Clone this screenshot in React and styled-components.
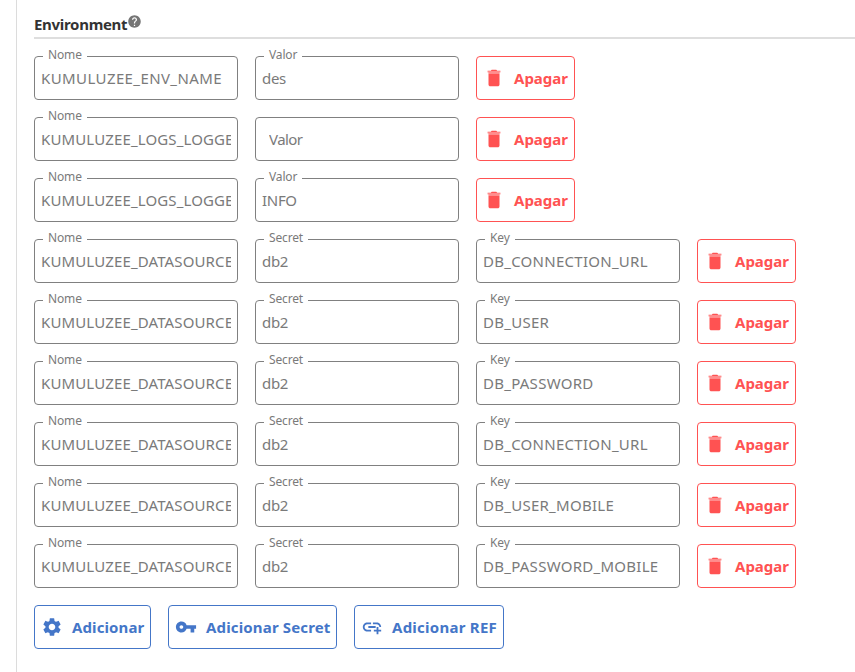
import React from "react";
import styled, { createGlobalStyle } from "styled-components";
import { MdSettings, MdVpnKey, MdAddLink, MdHelp } from "react-icons/md";

const GlobalStyle = createGlobalStyle`
  * { box-sizing: border-box; }
  body { margin: 0; background: #fff; font-family: "Noto Sans", sans-serif; }
`;

const Page = styled.div`
  height: 672px;
  padding-left: 16px;
  overflow: hidden;
`;

const Panel = styled.section`
  height: 100%;
  border-left: 1px solid #dcdcdc;
  padding: 12px 0 0 17px;
`;

const Header = styled.header`
  display: flex;
  align-items: flex-start;
  height: 27px;
  border-bottom: 2px solid #dedede;
  margin-bottom: 17px;
`;

const Title = styled.h2`
  margin: 0;
  font-size: 15px;
  line-height: 24px;
  font-weight: 700;
  letter-spacing: -0.3px;
  color: #333;
`;

const HelpIcon = styled(MdHelp)`
  width: 15px;
  height: 15px;
  margin: 2px 0 0 0;
  color: #757575;
`;

const Rows = styled.div`
  display: grid;
  gap: 17px;
`;

const Row = styled.div`
  display: flex;
  gap: 17px;
  height: 44px;
`;

const Field = styled.label`
  position: relative;
  width: 204px;
  height: 44px;
  border: 1px solid #808080;
  border-radius: 4px;
  padding: 0 6px;
`;

const FloatingLabel = styled.span`
  position: absolute;
  top: -10px;
  left: 8px;
  padding: 0 5px;
  background: #fff;
  font-size: 12px;
  line-height: 16px;
  letter-spacing: -0.15px;
  color: #7a7a7a;
`;

const Input = styled.input`
  display: block;
  width: 100%;
  height: 42px;
  margin: 0;
  padding: 0 0 0 ${(p) => (p.$empty ? "7px" : "0")};
  border: 0;
  outline: 0;
  background: transparent;
  font-family: inherit;
  font-size: 15px;
  letter-spacing: ${(p) => p.$tracking}px;
  color: #7a7a7a;
  &::placeholder { color: #7a7a7a; opacity: 1; }
`;

const Button = styled.button`
  display: flex;
  align-items: center;
  gap: 9px;
  flex: none;
  width: ${(p) => p.$width}px;
  height: 44px;
  padding: 0 6px;
  border: 1px solid currentColor;
  border-radius: 4px;
  background: #fff;
  color: ${(p) => (p.$danger ? "#ff5252" : "#4476c8")};
  font-family: inherit;
  font-size: 15px;
  font-weight: 700;
  letter-spacing: ${(p) => p.$tracking || 0}px;
  white-space: nowrap;
  svg { width: 22px; height: 22px; flex: none; }
`;

const Actions = styled.div`
  display: flex;
  gap: 17px;
  margin-top: 17px;
`;

function TrashIcon() {
  return (
    <svg viewBox="0 0 24 24" fill="currentColor" aria-hidden="true">
      <path d="M6 19c0 1.1.9 2 2 2h8c1.1 0 2-.9 2-2V7H6v12z" />
      <path d="M19 4h-3.5l-1-1h-5l-1 1H5v1h14z" />
      <path d="M5 5h14v1h-1v1H6V6H5z" opacity=".65" />
    </svg>
  );
}

// Identifiers are set slightly wider than ordinary words.
function trackingFor(value) {
  if (!value) return -0.55;
  if (!value.includes("_")) return -0.3;
  if (value.startsWith("KUMULUZEE_ENV")) return 0.4;
  if (value.startsWith("KUMULUZEE")) return 0.13;
  return 0.27;
}

function TextField({ label, value }) {
  return (
    <Field>
      {value && <FloatingLabel>{label}</FloatingLabel>}
      <Input readOnly value={value} placeholder={label} $empty={!value} $tracking={trackingFor(value)} />
    </Field>
  );
}

const variables = [
  [["Nome", "KUMULUZEE_ENV_NAME"], ["Valor", "des"]],
  [["Nome", "KUMULUZEE_LOGS_LOGGE"], ["Valor", ""]],
  [["Nome", "KUMULUZEE_LOGS_LOGGE"], ["Valor", "INFO"]],
  ...["DB_CONNECTION_URL", "DB_USER", "DB_PASSWORD", "DB_CONNECTION_URL", "DB_USER_MOBILE", "DB_PASSWORD_MOBILE"].map((key) => [
    ["Nome", "KUMULUZEE_DATASOURCE"], ["Secret", "db2"], ["Key", key],
  ]),
];

export default function App() {
  return (
    <Page>
      <GlobalStyle />
      <Panel>
        <Header><Title>Environment</Title><HelpIcon /></Header>
        <Rows>
          {variables.map((fields, i) => (
            <Row key={i}>
              {fields.map(([label, value]) => <TextField key={label} label={label} value={value} />)}
              <Button $danger $width={99}><TrashIcon />Apagar</Button>
            </Row>
          ))}
        </Rows>
        <Actions>
          <Button $width={117} $tracking={0.1}><MdSettings />Adicionar</Button>
          <Button $width={169} $tracking={0.15}><MdVpnKey />Adicionar Secret</Button>
          <Button $width={150} $tracking={0.25}><MdAddLink />Adicionar REF</Button>
        </Actions>
      </Panel>
    </Page>
  );
}
